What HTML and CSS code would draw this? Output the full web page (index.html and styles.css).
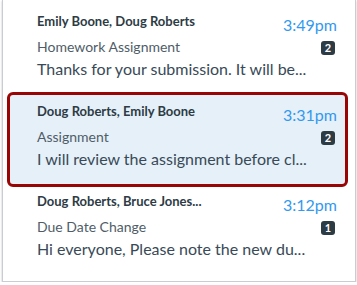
FILE: index.html
```html
<!DOCTYPE html>
<html lang="en">
<head>
  <meta charset="UTF-8">
  <title>Inbox</title>
  <link rel="stylesheet" href="styles.css">
</head>
<body>
  <div class="inbox">
    <div class="conv">
      <div class="conv-main">
        <div class="names">Emily Boone, Doug Roberts</div>
        <div class="subject">Homework Assignment</div>
        <div class="preview">Thanks for your submission. It will be...</div>
      </div>
      <div class="conv-side">
        <div class="time">3:49pm</div>
        <span class="count">2</span>
      </div>
    </div>

    <div class="conv selected">
      <div class="conv-main">
        <div class="names">Doug Roberts, Emily Boone</div>
        <div class="subject">Assignment</div>
        <div class="preview">I will review the assignment before cl...</div>
      </div>
      <div class="conv-side">
        <div class="time">3:31pm</div>
        <span class="count">2</span>
      </div>
    </div>

    <div class="conv">
      <div class="conv-main">
        <div class="names">Doug Roberts, Bruce Jones...</div>
        <div class="subject">Due Date Change</div>
        <div class="preview">Hi everyone, Please note the new du...</div>
      </div>
      <div class="conv-side">
        <div class="time">3:12pm</div>
        <span class="count">1</span>
      </div>
    </div>
  </div>
</body>
</html>
```

FILE: styles.css
```css
body {
  margin: 0;
  background: white;
  font-family: Lato, 'Open Sans', sans-serif;
}

.inbox {
  margin-left: 2px;
  width: 352px;
  height: 281px;
  border: 1px solid #c9cdd1;
  border-top: 0;
  box-shadow: 0 1px 2px rgba(0, 0, 0, 0.25);
  background: white;
}

.conv {
  display: flex;
  justify-content: space-between;
  height: 90px;
  box-sizing: border-box;
  padding: 13px 18px 0 34px;
}

.conv.selected {
  height: 95px;
  margin: 2px 7px -7px 4px;
  padding: 8px 8px 0 27px;
  border: 3px solid #990505;
  border-radius: 6px;
  background: #e6f0f8;
}

.conv-main {
  min-width: 0;
}

.names {
  font-size: 13px;
  line-height: 17px;
  font-weight: bold;
  color: #2d3b45;
  white-space: nowrap;
}

.subject {
  margin-top: 8px;
  font-size: 14px;
  line-height: 18px;
  color: #4f5d68;
  white-space: nowrap;
}

.preview {
  margin-top: 3px;
  font-size: 16px;
  line-height: 20px;
  color: #384a57;
  white-space: nowrap;
}

.conv-side {
  display: flex;
  flex-direction: column;
  align-items: flex-end;
  padding-top: 2px;
}

.time {
  font-size: 16px;
  line-height: 19px;
  color: #3299ef;
}

.count {
  margin-top: 7px;
  margin-right: 2px;
  width: 14px;
  height: 14px;
  border-radius: 3px;
  background: #2d3b45;
  color: white;
  font-size: 11px;
  font-weight: bold;
  line-height: 14px;
  text-align: center;
}
```
